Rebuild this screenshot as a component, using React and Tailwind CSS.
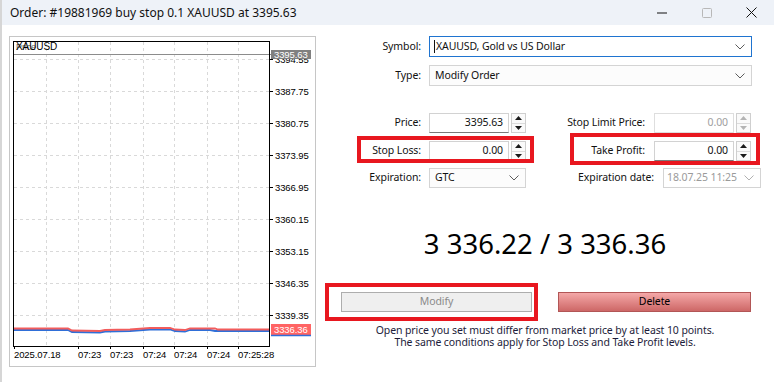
import React from 'react';

const gridX = [36, 68, 100, 133, 164, 197, 228];
const priceLabels = [
  ['3387.75', 91],
  ['3380.75', 123],
  ['3373.95', 155],
  ['3366.95', 187],
  ['3360.15', 219],
  ['3353.15', 251],
  ['3346.35', 283],
  ['3339.35', 315],
];
const timeLabels = [
  ['2025.07.18', 4],
  ['07:23', 68],
  ['07:23', 100],
  ['07:24', 133],
  ['07:24', 164],
  ['07:24', 197],
  ['07:25:28', 228],
];

const askLine = [
  [13, 328.5], [68, 328.5], [72, 330.5], [100, 331], [105, 330], [130, 329.5], [150, 328],
  [170, 328], [175, 329.5], [185, 330], [190, 328.5], [215, 328.5], [218, 329.5], [269, 329.5],
];
const bidLine = [
  [13, 330], [68, 330], [72, 332], [100, 332.5], [105, 331.5], [130, 331], [150, 329.5],
  [170, 329.5], [175, 331], [185, 331.5], [190, 330], [210, 330], [215, 331], [269, 331],
];

const toPoints = (pts) => pts.map(([x, y]) => `${x - 10},${y - 37}`).join(' ');

const Chart = () => (
  <svg width="305" height="329" style={{ fontFamily: '"Liberation Sans", Arial, sans-serif' }}>
    {/* grid */}
    {gridX.map((x) => (
      <line key={x} x1={x + 0.5} y1={5} x2={x + 0.5} y2={309} stroke="#d9d9d9" strokeDasharray="3 3" />
    ))}
    {[59, ...priceLabels.map((p) => p[1])].map((y) => (
      <line key={y} x1={4} y1={y - 37 + 0.5} x2={259} y2={y - 37 + 0.5} stroke="#d9d9d9" strokeDasharray="3 3" />
    ))}
    <line x1={4} y1={17.5} x2={262} y2={17.5} stroke="#8c8c8c" />

    {/* price lines */}
    <polyline points={toPoints(bidLine)} fill="none" stroke="#2f6fd8" strokeWidth="1.8" />
    <polyline points={toPoints(askLine)} fill="none" stroke="#f25c5c" strokeWidth="1.8" />

    <rect x={3.5} y={4.5} width={256} height={305} fill="none" stroke="#000" />

    {/* axis ticks and labels */}
    {[59, ...priceLabels.map((p) => p[1])].map((y) => (
      <line key={'t' + y} x1={260} y1={y - 37 + 0.5} x2={263} y2={y - 37 + 0.5} stroke="#000" />
    ))}
    <text x={265} y={59 - 37 + 3.5} fontSize="9.5" fill="#000">3394.55</text>
    {priceLabels.map(([t, y]) => (
      <text key={t} x={265} y={y - 37 + 3.5} fontSize="9.5" fill="#000">{t}</text>
    ))}
    <rect x={261} y={13} width={40} height={9} fill="#808080" />
    <text x={264} y={21} fontSize="9.5" fill="#fff">3395.63</text>
    <rect x={261} y={287} width={40} height={11} fill="#ff6464" />
    <line x1={261} y1={298.5} x2={301} y2={298.5} stroke="#2f6fd8" strokeWidth="1.5" />
    <text x={264} y={296} fontSize="9.5" fill="#fff">3336.36</text>

    {timeLabels.map(([t, x], i) => (
      <g key={i}>
        <line x1={x + 0.5} y1={309} x2={x + 0.5} y2={312} stroke="#000" />
        <text x={x} y={321} fontSize="9.5" fill="#000">{t}</text>
      </g>
    ))}

    <text x={6} y={13} fontSize="9" fill="#6a6a6a">Price</text>
    <text x={6} y={13} fontSize="10" fill="#000">XAUUSD</text>
  </svg>
);

const Chevron = ({ color = '#5c5c5c' }) => (
  <svg width="10" height="6" className="shrink-0">
    <path d="M0.5 0.5 L5 5 L9.5 0.5" fill="none" stroke={color} strokeWidth="1" />
  </svg>
);

const Spinner = ({ disabled }) => {
  const c = disabled ? '#b4b4b4' : '#1a1a1a';
  return (
    <div className="w-[15px] h-[20px] flex flex-col border border-[#cfcfcf] bg-[#fafafa]">
      <div className="flex-1 flex items-center justify-center border-b border-[#dcdcdc]">
        <svg width="7" height="4"><polygon points="0,4 3.5,0 7,4" fill={c} /></svg>
      </div>
      <div className="flex-1 flex items-center justify-center">
        <svg width="7" height="4"><polygon points="0,0 3.5,4 7,0" fill={c} /></svg>
      </div>
    </div>
  );
};

const NumInput = ({ value, disabled }) => (
  <div
    className={`w-[80px] h-[20px] flex items-center justify-end pr-[5px] border ${
      disabled
        ? 'border-[#dedede] text-[#a0a0a0] bg-white'
        : 'border-[#d2d2d2] border-b-[#7a7a7a] text-[#111]'
    }`}
  >
    {value}
  </div>
);

const RedBox = ({ className }) => (
  <div className={`absolute border-[4px] border-[#e8171f] pointer-events-none ${className}`} />
);

export default function App() {
  return (
    <div
      className="w-[774px] h-[382px] bg-white overflow-hidden text-[10.5px] tracking-[-0.1px] text-[#111] border-l-2 border-[#d6d6d6] whitespace-nowrap"
      style={{ fontFamily: '"Noto Sans", "Open Sans", sans-serif' }}
    >
      {/* Title bar */}
      <div className="h-[25px] bg-[#eef2f8] flex items-center">
        <div className="pl-[8px] flex-1 leading-none text-[12px] tracking-normal">Order: #19881969 buy stop 0.1 XAUUSD at 3395.63</div>
        <div className="flex h-full">
          <div className="w-[45px] flex items-center justify-center">
            <svg width="10" height="2"><line x1="0" y1="1" x2="10" y2="1" stroke="#111" /></svg>
          </div>
          <div className="w-[45px] flex items-center justify-center">
            <svg width="10" height="10"><rect x="0.5" y="0.5" width="9" height="9" rx="1" fill="none" stroke="#b8b8b8" /></svg>
          </div>
          <div className="w-[45px] flex items-center justify-center">
            <svg width="11" height="11"><path d="M0.5 0.5 L10.5 10.5 M10.5 0.5 L0.5 10.5" stroke="#111" strokeWidth="1" /></svg>
          </div>
        </div>
      </div>

      <div className="flex">
        {/* Chart panel */}
        <div className="ml-[7px] mt-[11px] w-[307px] h-[331px] border border-[#c6c6c6] shrink-0">
          <Chart />
        </div>

        {/* Form */}
        <div className="ml-[4px] w-[450px] flex flex-col">
          <div className="mt-[11px] flex items-center h-[21px]">
            <div className="w-[101px] text-right">Symbol:</div>
            <div className="ml-[8px] w-[323px] h-[21px] border border-[#1f74d0] flex items-center justify-between pl-[4px] pr-[6px]">
              <span className="flex items-center">
                <span className="w-px h-[13px] bg-[#111] mr-[1px]" />
                XAUUSD, Gold vs US Dollar
              </span>
              <Chevron />
            </div>
          </div>

          <div className="mt-[8px] flex items-center h-[21px]">
            <div className="w-[101px] text-right">Type:</div>
            <div className="ml-[8px] w-[323px] h-[21px] border border-[#d4d4d4] bg-[#fcfcfc] flex items-center justify-between pl-[5px] pr-[6px]">
              <span>Modify Order</span>
              <Chevron />
            </div>
          </div>

          {/* Price / Stop Limit */}
          <div className="mt-[27px] flex items-center h-[20px]">
            <div className="w-[101px] text-right">Price:</div>
            <div className="ml-[8px]"><NumInput value="3395.63" /></div>
            <div className="ml-[2px]"><Spinner /></div>
            <div className="w-[119px] text-right">Stop Limit Price:</div>
            <div className="ml-[9px]"><NumInput value="0.00" disabled /></div>
            <div className="ml-[2px]"><Spinner disabled /></div>
          </div>

          {/* Stop Loss / Take Profit */}
          <div className="mt-[8px] flex items-center h-[20px]">
            <div className="relative flex items-center">
              <RedBox className="left-[37px] top-[-5px] w-[177px] h-[27px]" />
              <div className="w-[101px] text-right">Stop Loss:</div>
              <div className="ml-[8px]"><NumInput value="0.00" /></div>
              <div className="ml-[2px]"><Spinner /></div>
            </div>
            <div className="relative flex items-center">
              <RedBox className="left-[44px] top-[-8px] w-[190px] h-[32px]" />
              <div className="w-[119px] text-right">Take Profit:</div>
              <div className="ml-[9px]"><NumInput value="0.00" /></div>
              <div className="ml-[2px]"><Spinner /></div>
            </div>
          </div>

          {/* Expiration */}
          <div className="mt-[7px] flex items-center h-[20px]">
            <div className="w-[101px] text-right">Expiration:</div>
            <div className="ml-[8px] w-[97px] h-[20px] border border-[#d4d4d4] bg-[#fcfcfc] flex items-center justify-between pl-[5px] pr-[6px]">
              <span>GTC</span>
              <Chevron />
            </div>
            <div className="w-[128px] text-right">Expiration date:</div>
            <div className="ml-[9px] w-[98px] h-[20px] border border-[#d4d4d4] bg-white flex items-center justify-between pl-[3px] pr-[6px] text-[#9a9a9a]">
              <span>18.07.25 11:25</span>
              <Chevron color="#b0b0b0" />
            </div>
          </div>

          {/* Market price */}
          <div className="mt-[38px] h-[36px] flex items-center justify-center text-[27.5px] tracking-normal leading-none text-[#000]">
            3 336.22 / 3 336.36
          </div>

          {/* Buttons */}
          <div className="mt-[30px] flex items-center h-[20px]">
            <div className="relative ml-[21px]">
              <RedBox className="left-[-16px] top-[-9px] w-[213px] h-[38px]" />
              <div className="w-[191px] h-[20px] flex items-center justify-center border border-[#adadad] bg-[#efefef] text-[#8a8a8a]">
                Modify
              </div>
            </div>
            <div className="ml-[26px] w-[193px] h-[20px] flex items-center justify-center border border-[#b25656] bg-gradient-to-b from-[#f4a8a8] to-[#cd6767] text-[#000]">
              Delete
            </div>
          </div>

          <div className="mt-[12px] text-center leading-[12px] text-[#1c1c3a]">
            <div>Open price you set must differ from market price by at least 10 points.</div>
            <div>The same conditions apply for Stop Loss and Take Profit levels.</div>
          </div>
        </div>
      </div>
    </div>
  );
}
